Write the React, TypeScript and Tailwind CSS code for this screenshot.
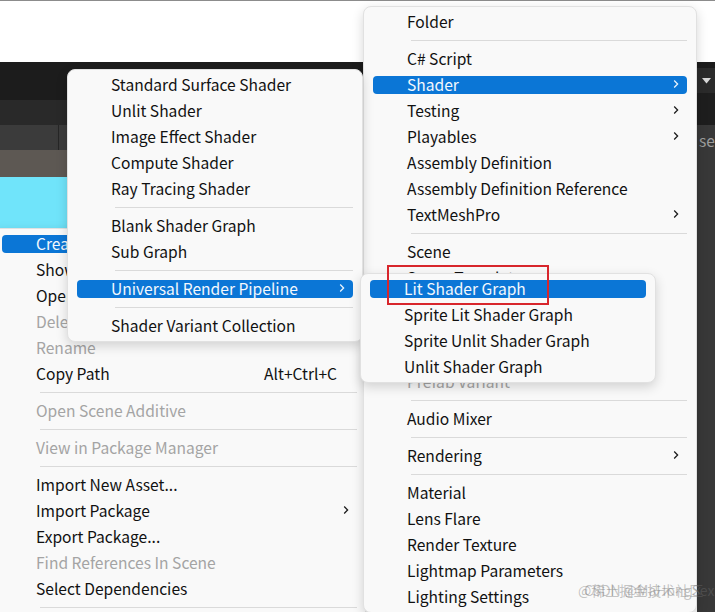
import React from 'react';

type Row =
  | { kind: 'item'; label: string; disabled?: boolean; active?: boolean; sub?: boolean; shortcut?: string }
  | { kind: 'sep' };

const it = (label: string, opts: { disabled?: boolean; active?: boolean; sub?: boolean; shortcut?: string } = {}): Row => ({
  kind: 'item',
  label,
  ...opts,
});
const sep: Row = { kind: 'sep' };

// Project window context menu (mostly hidden behind the submenus)
const PROJECT_MENU: Row[] = [
  it('Create', { active: true, sub: true }),
  it('Show in Explorer'),
  it('Open'),
  it('Delete', { disabled: true }),
  it('Rename', { disabled: true }),
  it('Copy Path', { shortcut: 'Alt+Ctrl+C' }),
  sep,
  it('Open Scene Additive', { disabled: true }),
  sep,
  it('View in Package Manager', { disabled: true }),
  sep,
  it('Import New Asset...'),
  it('Import Package', { sub: true }),
  it('Export Package...'),
  it('Find References In Scene', { disabled: true }),
  it('Select Dependencies'),
  sep,
];

const CREATE_MENU: Row[] = [
  it('Folder'),
  sep,
  it('C# Script'),
  it('Shader', { active: true, sub: true }),
  it('Testing', { sub: true }),
  it('Playables', { sub: true }),
  it('Assembly Definition'),
  it('Assembly Definition Reference'),
  it('TextMeshPro', { sub: true }),
  sep,
  it('Scene'),
  it('Scene Template'),
  it('Scene Template From Scene'),
  it('Scene Template Pipeline'),
  it('Prefab'),
  it('Prefab Variant', { disabled: true }),
  sep,
  it('Audio Mixer'),
  sep,
  it('Rendering', { sub: true }),
  sep,
  it('Material'),
  it('Lens Flare'),
  it('Render Texture'),
  it('Lightmap Parameters'),
  it('Lighting Settings'),
];

const SHADER_MENU: Row[] = [
  it('Standard Surface Shader'),
  it('Unlit Shader'),
  it('Image Effect Shader'),
  it('Compute Shader'),
  it('Ray Tracing Shader'),
  sep,
  it('Blank Shader Graph'),
  it('Sub Graph'),
  sep,
  it('Universal Render Pipeline', { active: true, sub: true }),
  sep,
  it('Shader Variant Collection'),
];

const URP_MENU: Row[] = [
  it('Lit Shader Graph', { active: true }),
  it('Sprite Lit Shader Graph'),
  it('Sprite Unlit Shader Graph'),
  it('Unlit Shader Graph'),
];

function Chevron({ light }: { light?: boolean }) {
  return (
    <svg width="6" height="10" viewBox="0 0 6 10" className="shrink-0">
      <path
        d="M1.2 1.5 L4.6 5 L1.2 8.5"
        fill="none"
        stroke={light ? '#eaf3fc' : '#1d1d1d'}
        strokeWidth="1.3"
      />
    </svg>
  );
}

function Menu({ rows, className }: { rows: Row[]; className: string }) {
  return (
    <div
      className={`absolute rounded-lg border border-[#e1e1e1] bg-[#f9f9f9] py-[2px] shadow-[0_4px_12px_rgba(0,0,0,0.16)] ${className}`}
    >
      {rows.map((r, i) =>
        r.kind === 'sep' ? (
          <div key={i} className="flex h-[11px] items-center pl-[47px] pr-[9px]">
            <div className="h-px w-full bg-[#dadada]" />
          </div>
        ) : (
          <div key={i} className="flex h-[26px] items-center px-[9px]">
            <div
              className={`flex h-[18px] flex-1 items-center rounded-[4px] pb-[2px] pl-[34px] pr-[8px] leading-[16px] ${
                r.active ? 'bg-[#0b76d6] text-[#f3f8fd]' : r.disabled ? 'text-[#a4a4a4]' : 'text-[#111111]'
              }`}
            >
              <span className="flex-1 whitespace-nowrap">{r.label}</span>
              {r.shortcut && <span className="mr-[12px] whitespace-nowrap">{r.shortcut}</span>}
              {r.sub && <Chevron light={r.active} />}
            </div>
          </div>
        )
      )}
    </div>
  );
}

export default function App() {
  return (
    <div
      className="relative flex h-[612px] w-[715px] flex-col overflow-hidden bg-white text-[15.6px]"
      style={{ fontFamily: '"Noto Sans CJK SC", "Noto Sans", sans-serif' }}
    >
      {/* editor background behind the menus */}
      <div className="h-px bg-[#8c8c8c]" />
      <div className="flex flex-1">
        <div className="flex flex-1 flex-col">
          <div className="h-[61px] bg-white" />
          <div className="h-[38px] bg-[#1c1c1c]" />
          <div className="h-[25px] bg-[#292929]" />
          <div className="flex h-[25px] bg-[#3b3b3b]">
            <div className="w-[59px] border-r border-[#262626]" />
          </div>
          <div className="h-[27px] bg-[#5d5853]" />
          <div className="h-[51px] bg-[#70e4fa]" />
          <div className="flex-1 bg-[#f9f9f9]" />
        </div>
        <div className="flex w-[18px] flex-col">
          <div className="h-[61px] bg-white" />
          <div className="h-[6px] bg-[#1c1c1c]" />
          <div className="flex h-[25px] items-center justify-center bg-[#2b2b2b]">
            <svg width="9" height="6" viewBox="0 0 9 6">
              <path d="M0 0 H9 L4.5 5.5 Z" fill="#d8d8d8" />
            </svg>
          </div>
          <div className="h-[32px] bg-[#1e1e1e]" />
          <div className="flex-1 bg-[#383838] pl-[2px] pt-[4px] text-[#9c9c9c]">se</div>
        </div>
      </div>

      <Menu rows={PROJECT_MENU} className="left-[-8px] top-[228px] w-[375px]" />
      <Menu rows={CREATE_MENU} className="left-[363px] top-[6px] w-[334px]" />
      <Menu rows={SHADER_MENU} className="left-[67px] top-[69px] w-[296px]" />
      <Menu rows={URP_MENU} className="left-[360px] top-[273px] w-[296px]" />

      {/* annotation box */}
      <div className="absolute left-[387px] top-[265px] h-[40px] w-[162px] border-2 border-[#d8262c]" />

      {/* watermark */}
      <div className="absolute left-[578px] top-[580px] whitespace-nowrap text-[14px] text-[rgba(110,110,110,0.4)]">
        @稀土掘金技术社区
      </div>
      <div className="absolute left-[584px] top-[580px] whitespace-nowrap text-[14px] text-[rgba(110,110,110,0.4)]">
        CSDN @MaHongSex
      </div>
    </div>
  );
}
